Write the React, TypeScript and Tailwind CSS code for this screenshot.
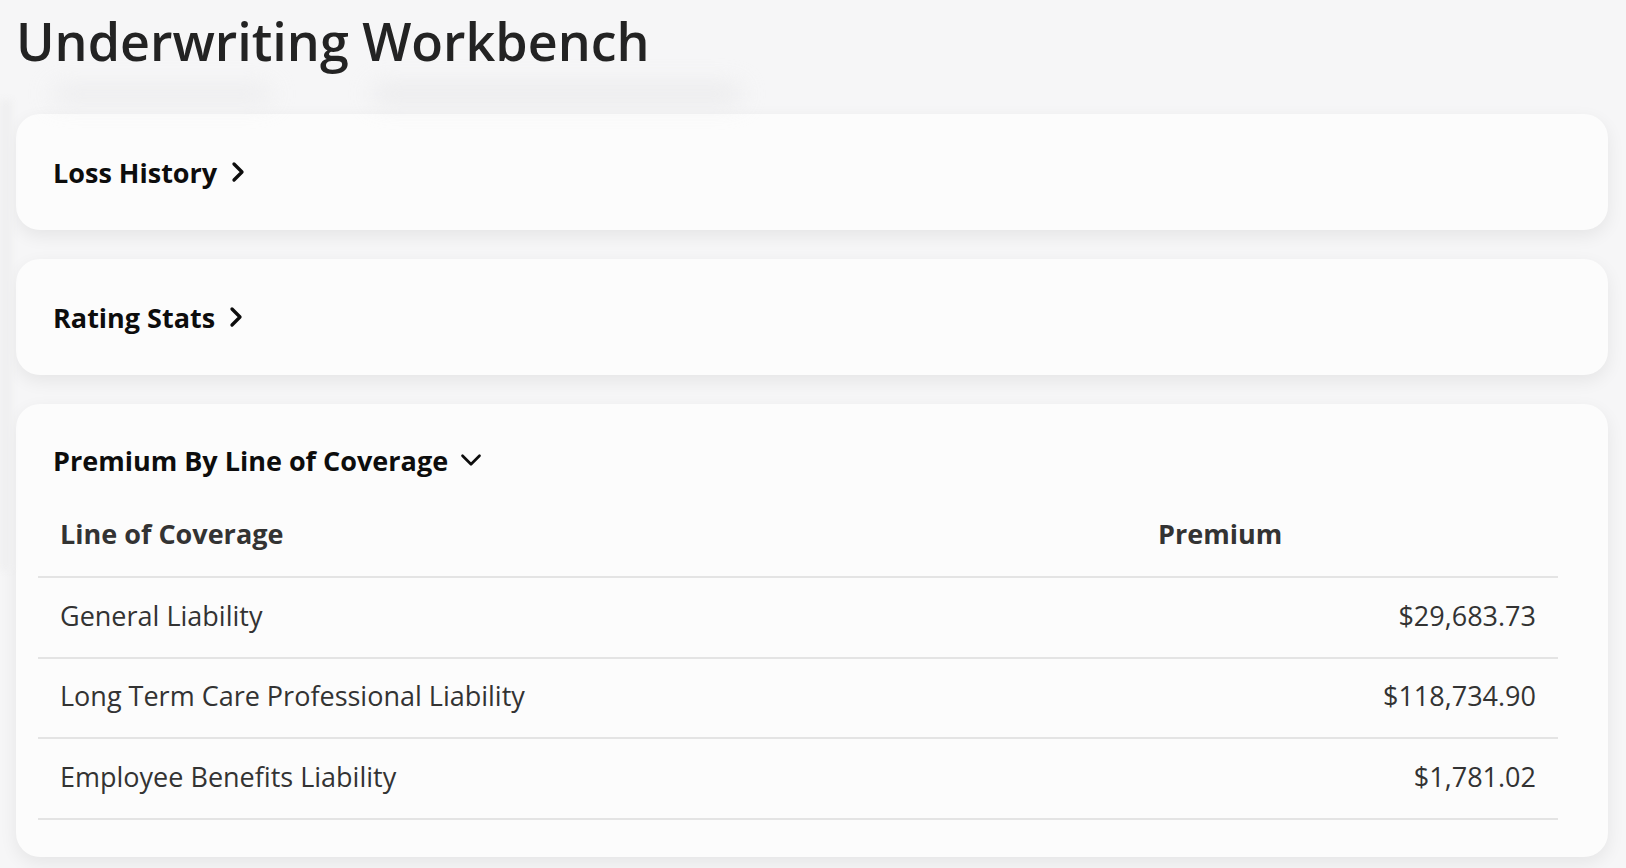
import { ChevronRight, ChevronDown } from 'lucide-react'

const ROWS = [
  { line: 'General Liability',                      premium: '$29,683.73' },
  { line: 'Long Term Care Professional Liability',  premium: '$118,734.90' },
  { line: 'Employee Benefits Liability',            premium: '$1,781.02' },
]

function CollapsedCard({ title }: { title: string }) {
  return (
    <section className="rounded-[24px] bg-[#fcfcfc] shadow-[0_6px_18px_rgba(0,0,0,0.07)] px-[37px] h-[116px] flex items-center">
      <button className="flex items-center gap-[5px] text-[27px] font-bold text-[#0d0d0d] leading-none">
        {title}
        <ChevronRight size={32} strokeWidth={2.5} />
      </button>
    </section>
  )
}

export default function App() {
  return (
    <div className="min-h-screen bg-[#f6f6f7] font-['Open_Sans',sans-serif] flex">
      <div className="w-[12px] shrink-0 mt-[100px] mb-[300px] bg-[#efeff0] blur-[3px]" />
      <main className="flex-1 pl-[4px] pr-[18px] pb-[13px]">
        <h1 className="pt-[8px] text-[52px] font-semibold text-[#232323] leading-[66px]">Underwriting Workbench</h1>

        <div className="flex gap-[100px] pl-[36px] h-[40px] items-center">
          <div className="w-[220px] h-[16px] rounded-full bg-[#e6e6e8] blur-md opacity-70" />
          <div className="w-[370px] h-[18px] rounded-full bg-[#e4e4e6] blur-md opacity-70" />
        </div>

        <div className="flex flex-col gap-[29px]">
          <CollapsedCard title="Loss History" />
          <CollapsedCard title="Rating Stats" />

          <section className="rounded-[24px] bg-[#fcfcfc] shadow-[0_6px_18px_rgba(0,0,0,0.07)] pt-[39px] pb-[37px]">
            <button className="ml-[37px] flex items-center gap-[6px] text-[27px] font-bold text-[#0d0d0d] leading-none">
              Premium By Line of Coverage
              <ChevronDown size={34} strokeWidth={1.9} />
            </button>

            <table className="ml-[22px] mr-[50px] mt-[20px] w-[1520px] text-[27px] text-[#333]">
              <thead>
                <tr className="border-b-2 border-[#e4e4e4] text-left">
                  <th className="px-[22px] pb-[4px] h-[80px] font-bold text-[#333]">Line of Coverage</th>
                  <th className="px-[22px] pb-[4px] w-[422px] font-bold text-[#333]">Premium</th>
                </tr>
              </thead>
              <tbody>
                {ROWS.map(row => (
                  <tr key={row.line} className="border-b-2 border-[#e4e4e4]">
                    <td className="px-[22px] pb-[3px] h-[80.5px]">{row.line}</td>
                    <td className="px-[22px] pb-[3px] text-right">{row.premium}</td>
                  </tr>
                ))}
              </tbody>
            </table>
          </section>
        </div>
      </main>
    </div>
  )
}
